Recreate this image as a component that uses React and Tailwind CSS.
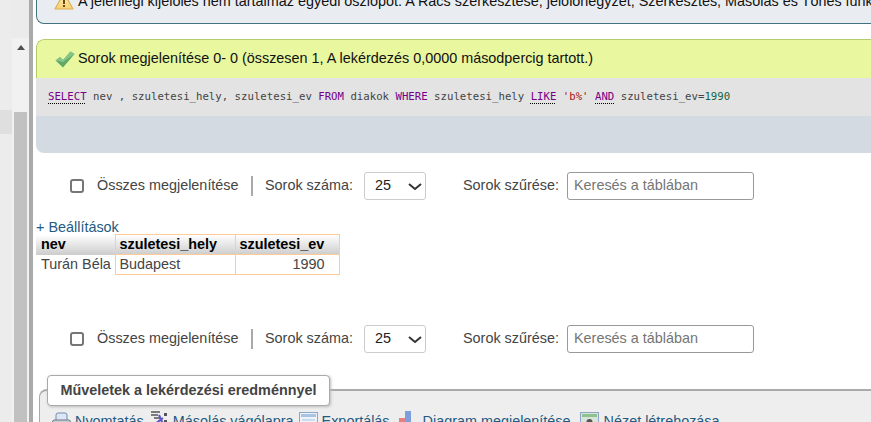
const font = { fontFamily: '"Liberation Sans", Arial, sans-serif' };

function Warn() {
  return (
    <svg width="20" height="18" viewBox="0 0 20 18" className="mb-[-2px] shrink-0">
      <defs>
        <linearGradient id="w" x1="0" y1="0" x2="0" y2="1">
          <stop offset="0" stopColor="#fff6c8" />
          <stop offset="1" stopColor="#f7cf70" />
        </linearGradient>
      </defs>
      <path d="M10 1 L19 17 H1 Z" fill="url(#w)" stroke="#e0ad55" strokeWidth="1.2" strokeLinejoin="round" />
      <rect x="9" y="5" width="2" height="7" fill="#6b4a10" />
      <rect x="9" y="13" width="2" height="2" fill="#6b4a10" />
    </svg>
  );
}

function Check() {
  return (
    <svg width="20" height="17" viewBox="0 0 20 17" className="shrink-0">
      <path d="M0.5 9.5 L5 6 L8 9 L15.5 0.5 L19.5 3 L8 16.5 Z" fill="#5fa866" />
      <path d="M0.5 9.5 L5 6 L8 9 L15.5 0.5 L19.5 3 L8 11 Z" fill="#86c48a" />
    </svg>
  );
}

function Controls() {
  return (
    <div className="flex h-7 items-center text-[14.4px] text-[#444]">
      <span className="ml-[34px] h-[14px] w-[14px] rounded-[3px] border-2 border-[#767676] bg-white" />
      <span className="ml-[13px] w-[154px] whitespace-nowrap">Összes megjelenítése</span>
      <span className="h-5 w-[2px] bg-[#aaa]" />
      <span className="ml-[12px] w-[99px] whitespace-nowrap">Sorok száma:</span>
      <div className="flex h-7 w-[62px] items-center justify-between rounded-[3px] border border-[#ccc] bg-white pl-[10px] pr-[2px] text-[#222]">
        <span>25</span>
        <svg width="16" height="9" viewBox="0 0 16 9">
          <path d="M2 2 L8 7 L14 2" fill="none" stroke="#333" strokeWidth="2" />
        </svg>
      </div>
      <span className="ml-[37px] w-[104px] whitespace-nowrap">Sorok szűrése:</span>
      <div className="flex h-7 w-[187px] items-center rounded-[3px] border border-[#999] bg-white pl-[6px] text-[#757575]">
        Keresés a táblában
      </div>
    </div>
  );
}

const kw = "text-[#770088] underline decoration-dotted decoration-black underline-offset-2";

function Tool({ icon, children, className }) {
  return (
    <span className={"flex items-center whitespace-nowrap " + (className || "")}>
      {icon}
      <span>{children}</span>
    </span>
  );
}

export default function App() {
  return (
    <div style={font} className="flex h-[422px] w-[871px] overflow-hidden bg-white">
      <aside className="flex h-full w-[29px] shrink-0 bg-[#ebebeb]">
        <div className="flex w-[12px] flex-col bg-[#e8e8e8]">
          <div className="h-[110px] bg-[#ececec]" />
          <div className="h-[24px] bg-[#dfdfdf]" />
          <div className="flex-1 bg-[#ececec]" />
        </div>
        <div className="mt-[38px] flex w-[17px] flex-col items-center bg-[#f1f1f1]">
          <svg width="8" height="5" viewBox="0 0 8 5" className="mt-[7px]">
            <path d="M4 0 L8 5 H0 Z" fill="#505050" />
          </svg>
          <div className="mt-[62px] w-[13px] flex-1 bg-[#c1c1c1]" />
        </div>
      </aside>
      <div className="h-full w-[4px] shrink-0 bg-[#aaa]" />
      <main className="min-w-[838px] flex-1 pl-[3px]">
        <div className="flex h-[24px] w-[900px] items-end gap-[4px] rounded-bl-[8px] border-b border-l border-[#43727f] bg-[#e9edf1] pb-[15px] pl-[17px] text-[14.4px] leading-none whitespace-nowrap text-[#111]">
          <Warn />
          <span>A jelenlegi kijelölés nem tartalmaz egyedi oszlopot. A Rács szerkesztése, jelölőnégyzet, Szerkesztés, Másolás és Törlés funkciók nem érhetők el.</span>
        </div>
        <section className="mt-[15px] w-[900px] overflow-hidden rounded-l-[8px]">
          <div className="flex h-[39px] items-center gap-[3px] rounded-tl-[8px] border-t border-l border-[#b1cc6c] bg-[#e9f79f] pl-[18px] text-[14.4px] text-[#111]">
            <Check />
            <span>Sorok megjelenítése 0- 0 (összesen 1, A lekérdezés 0,0000 másodpercig tartott.)</span>
          </div>
          <div className="flex h-[38px] items-center whitespace-pre bg-[#e3e3e3] pt-[1px] pl-[12px] font-['DejaVu_Sans_Mono',monospace] text-[10.7px] text-[#444]">
            <span className={kw}>SELECT</span>
            <span> nev , szuletesi_hely, szuletesi_ev </span>
            <span className="text-[#770088]">FROM</span>
            <span> diakok </span>
            <span className="text-[#770088]">WHERE</span>
            <span> szuletesi_hely </span>
            <span className={kw}>LIKE</span>
            <span> </span>
            <span className="text-[#aa1111]">'b%'</span>
            <span> </span>
            <span className={kw}>AND</span>
            <span> szuletesi_ev=</span>
            <span className="text-[#116644]">1990</span>
          </div>
          <div className="h-[37px] bg-[#d3dae1]" />
        </section>
        <div className="mt-[19px]">
          <Controls />
        </div>
        <a className="mt-[20px] block text-[14.4px] leading-[14px] text-[#235a81]">+ Beállítások</a>
        <table className="w-[303px] table-fixed border-collapse text-[14.4px] leading-[15px] text-[#444]">
          <colgroup>
            <col className="w-[79px]" />
            <col className="w-[120px]" />
            <col className="w-[104px]" />
          </colgroup>
          <thead>
            <tr className="h-[20px] bg-gradient-to-b from-white to-[#cccccc] text-left font-bold text-black">
              <th className="p-0 pl-[5px]">nev</th>
              <th className="border-x border-t border-[#ffcc99] p-0 pl-[4px]">szuletesi_hely</th>
              <th className="border-x border-t border-[#ffcc99] p-0 pl-[4px]">szuletesi_ev</th>
            </tr>
          </thead>
          <tbody>
            <tr className="h-[20px]">
              <td className="p-0 pl-[5px] whitespace-nowrap">Turán Béla</td>
              <td className="border border-[#ffcc99] p-0 pl-[4px]">Budapest</td>
              <td className="border border-[#ffcc99] p-0 pr-[14px] text-right">1990</td>
            </tr>
          </tbody>
        </table>
        <div className="mt-[50px]">
          <Controls />
        </div>
        <div className="relative mt-[36px] ml-[3px] h-[40px] w-[900px] rounded-tl-[8px] border-t-2 border-l border-[#aaa] bg-[#eeeeee]">
          <div className="absolute top-[-16px] left-[7px] flex h-[31px] w-[283px] items-center justify-center rounded-[4px] border border-[#aaa] bg-white text-[14.4px] font-bold text-[#444] shadow-[1px_1px_3px_#bbb]">
            Műveletek a lekérdezési eredménnyel
          </div>
          <div className="absolute top-[21px] left-[12px] flex text-[14.4px] leading-[18px] text-[#235a81]">
            <Tool icon={
              <svg width="19" height="18" viewBox="0 0 19 18" className="mr-[4px] mt-[-1px]">
                <path d="M4 9 V3 Q4 1 6 1 H13 Q15 1 15 3 V9" fill="#dce6f5" stroke="#6f8db3" />
                <rect x="0.5" y="8" width="18" height="9" rx="2" fill="#c8ccd2" stroke="#6d7885" />
              </svg>
            }>Nyomtatás</Tool>
            <Tool className="ml-[6px]" icon={
              <svg width="19" height="18" viewBox="0 0 19 18" className="mr-[4px] mt-[-4px]">
                <path d="M1 2 H10 M1 5 H8 M4 8 H10" stroke="#555" strokeWidth="1.5" />
                <path d="M9 5 L13 14 M5 14 L13 8" stroke="#5a55c8" strokeWidth="2" />
                <rect x="14" y="3" width="3" height="3" fill="#555" />
                <rect x="14" y="10" width="3" height="3" fill="#555" />
              </svg>
            }>Másolás vágólapra</Tool>
            <Tool className="ml-[5px]" icon={
              <svg width="19" height="18" viewBox="0 0 19 18" className="mr-[4px] mt-[-1px]">
                <rect x="0.5" y="0.5" width="18" height="17" fill="#eef3fa" stroke="#8aa6c9" />
                <rect x="2" y="2" width="15" height="3" fill="#a9c3e3" />
                <path d="M3 8 H16 M3 11 H16 M3 14 H16" stroke="#a9c3e3" />
              </svg>
            }>Exportálás</Tool>
            <Tool className="ml-[9px]" icon={
              <svg width="20" height="18" viewBox="0 0 20 18" className="mr-[4px] mt-[-3px]">
                <rect x="0" y="7" width="7" height="11" fill="#e98080" />
                <rect x="6" y="0" width="6" height="18" fill="#7f9fdc" />
                <rect x="12" y="15" width="7" height="3" fill="#c0c0c0" />
              </svg>
            }>Diagram megjelenítése</Tool>
            <Tool className="ml-[9px]" icon={
              <svg width="19" height="18" viewBox="0 0 19 18" className="mr-[5px] mt-[-1px]">
                <rect x="0.5" y="0.5" width="18" height="17" fill="#d8e4d8" stroke="#8aa6c9" />
                <rect x="2" y="2" width="15" height="3" fill="#8fc28f" />
                <circle cx="9.5" cy="10" r="3" fill="#555" />
              </svg>
            }>Nézet létrehozása</Tool>
          </div>
        </div>
      </main>
    </div>
  );
}
